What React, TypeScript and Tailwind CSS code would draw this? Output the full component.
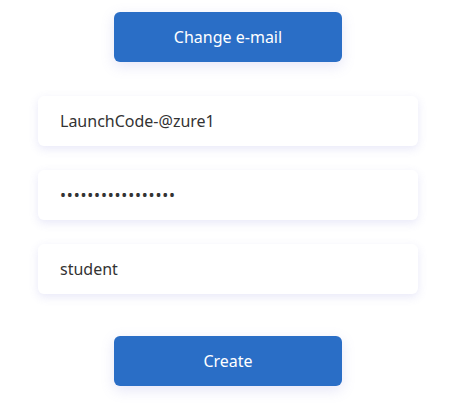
import React from 'react';

const font = { fontFamily: '"Noto Sans", "Open Sans", sans-serif' };

function Field({ value, type = 'text', className = '' }: { value: string; type?: string; className?: string }) {
  return (
    <input
      type={type}
      defaultValue={value}
      readOnly
      className={`w-[380px] h-[50px] rounded-md bg-white pl-[22px] pr-4 text-[16px] text-[#333] outline-none shadow-[0_3px_10px_rgba(110,110,210,0.16)] ${className}`}
    />
  );
}

function BlueButton({ label }: { label: string }) {
  return (
    <button className="w-[228px] h-[50px] rounded-md bg-[#2a6ec6] text-white text-[16px] shadow-[0_4px_14px_rgba(110,110,210,0.18)]">
      {label}
    </button>
  );
}

export default function App() {
  return (
    <div className="w-[456px] h-[409px] bg-white flex flex-col items-center pt-3" style={font}>
      <BlueButton label="Change e-mail" />
      <div className="flex flex-col gap-6 mt-[34px] mb-[42px]">
        <Field value="LaunchCode-@zure1" />
        <Field value="passwordpassword1" type="password" className="tracking-[0.8px]" />
        <Field value="student" />
      </div>
      <BlueButton label="Create" />
    </div>
  );
}
